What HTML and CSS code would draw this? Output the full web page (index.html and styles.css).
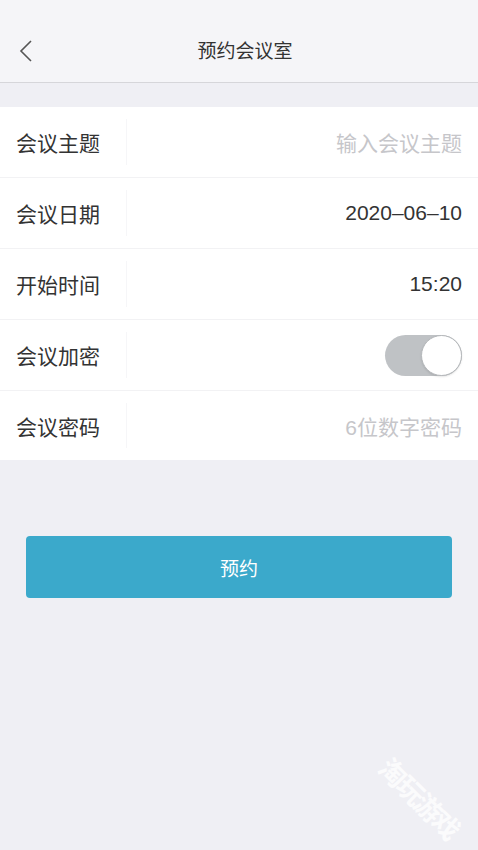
FILE: index.html
```html
<!DOCTYPE html>
<html lang="zh-CN">
<head>
  <meta charset="UTF-8">
  <title>预约会议室</title>
  <link rel="stylesheet" href="styles.css">
</head>
<body>

  <div class="navbar">
    <svg class="back" width="14" height="24" viewBox="0 0 14 24">
      <path d="M12 2 L2 12 L12 22" fill="none" stroke="#555" stroke-width="1.6"/>
    </svg>
    <div class="title">预约会议室</div>
  </div>

  <div class="form">
    <div class="row">
      <div class="label">会议主题</div>
      <div class="value placeholder">输入会议主题</div>
    </div>
    <div class="row">
      <div class="label">会议日期</div>
      <div class="value">2020–06–10</div>
    </div>
    <div class="row">
      <div class="label">开始时间</div>
      <div class="value">15:20</div>
    </div>
    <div class="row">
      <div class="label">会议加密</div>
      <div class="value">
        <div class="switch"><div class="knob"></div></div>
      </div>
    </div>
    <div class="row">
      <div class="label">会议密码</div>
      <div class="value placeholder">6位数字密码</div>
    </div>
  </div>

  <div class="actions">
    <button class="submit">预约</button>
  </div>

  <div class="watermark">淘玩游戏</div>

</body>
</html>
```

FILE: styles.css
```css
* {
  box-sizing: border-box;
}

html, body {
  margin: 0;
  height: 100%;
}

body {
  background: #efeff4;
  font-family: "Noto Sans CJK SC", "Noto Sans", sans-serif;
  color: #333;
  position: relative;
  overflow: hidden;
}

.navbar {
  height: 83px;
  background: #f5f5f8;
  border-bottom: 1px solid #d6d6da;
  display: flex;
  align-items: center;
  justify-content: center;
  position: relative;
  padding-top: 16px;
}

.back {
  position: absolute;
  left: 19px;
  top: 39px;
}

.title {
  font-size: 19px;
  color: #333;
  margin-left: 12px;
}

.form {
  margin-top: 24px;
  background: #fff;
}

.row {
  height: 71px;
  display: flex;
  align-items: center;
  padding: 0 16px;
  border-bottom: 1px solid #f2f2f4;
}

.row:last-child {
  border-bottom: none;
  height: 69px;
}

.label {
  width: 111px;
  font-size: 21px;
  color: #333;
  align-self: stretch;
  display: flex;
  align-items: center;
  border-right: 1px solid #f6f6f8;
  margin: 12px 0;
}

.value {
  flex: 1;
  text-align: right;
  font-family: "Liberation Sans", "Noto Sans CJK SC", sans-serif;
  font-size: 21px;
  color: #333;
  display: flex;
  justify-content: flex-end;
  align-items: center;
}

.placeholder {
  color: #c6c6ca;
}

.switch {
  width: 77px;
  height: 41px;
  border-radius: 21px;
  background: #bfc2c5;
  position: relative;
}

.knob {
  position: absolute;
  right: 0;
  top: 0;
  width: 41px;
  height: 41px;
  border-radius: 50%;
  background: #fff;
  border: 1px solid #b5b8bb;
  box-shadow: 0 1px 2px rgba(0, 0, 0, 0.1);
}

.actions {
  padding: 76px 26px 0;
}

.submit {
  width: 100%;
  height: 62px;
  border: none;
  border-radius: 4px;
  background: #3ba9cb;
  color: #fff;
  font-family: "Noto Sans CJK SC", "Noto Sans", sans-serif;
  font-size: 19px;
}

.watermark {
  position: absolute;
  left: 370px;
  top: 778px;
  font-size: 27px;
  font-weight: bold;
  color: rgba(255, 255, 255, 0.75);
  transform: rotate(45deg);
  letter-spacing: -2px;
}
```
